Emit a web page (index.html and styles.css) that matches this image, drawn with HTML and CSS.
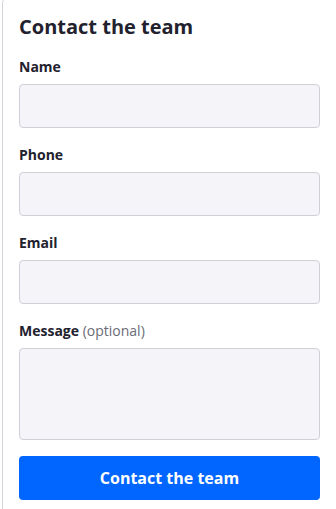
FILE: index.html
```html
<!DOCTYPE html>
<html lang="en">
<head>
<meta charset="utf-8">
<title>Contact the team</title>
<link rel="stylesheet" href="styles.css">
</head>
<body>
<div class="card">
  <h2 class="title">Contact the team</h2>
  <form class="form">
    <div class="field">
      <label class="label" for="name">Name</label>
      <input class="input" id="name" type="text">
    </div>
    <div class="field">
      <label class="label" for="phone">Phone</label>
      <input class="input" id="phone" type="tel">
    </div>
    <div class="field">
      <label class="label" for="email">Email</label>
      <input class="input" id="email" type="email">
    </div>
    <div class="field">
      <label class="label" for="msg">Message <span class="opt">(optional)</span></label>
      <textarea class="input textarea" id="msg"></textarea>
    </div>
    <button class="button" type="button">Contact the team</button>
  </form>
</div>
</body>
</html>
```
FILE: styles.css
```css
html, body {
  margin: 0;
  padding: 0;
  overflow: hidden;
  background: #ffffff;
}
body {
  font-family: "Open Sans", "Noto Sans", sans-serif;
  color: #22212e;
}
.card {
  box-sizing: border-box;
  width: 346px;
  margin: -3px 0 0 2px;
  padding: 16px 27px 16px 16px;
  border: 1px solid #d4d4dc;
  border-radius: 6px;
  background: #ffffff;
}
.title {
  margin: 0 0 16px 0;
  font-size: 20px;
  line-height: 26px;
  font-weight: 700;
}
.form {
  display: flex;
  flex-direction: column;
  gap: 16px;
}
.field {
  display: flex;
  flex-direction: column;
  gap: 7px;
}
.label {
  font-size: 14px;
  line-height: 21px;
  font-weight: 700;
}
.opt {
  font-weight: 400;
  color: #6b6b76;
}
.input {
  box-sizing: border-box;
  display: block;
  width: 100%;
  height: 44px;
  margin: 0;
  border: 1px solid #cfcfd7;
  border-radius: 4px;
  background: #f5f5f9;
  font: inherit;
}
.textarea {
  height: 92px;
  resize: none;
}
.button {
  box-sizing: border-box;
  height: 44px;
  width: 100%;
  border: 0;
  border-radius: 4px;
  background: #0066ff;
  color: #ffffff;
  font-family: "Open Sans", "Noto Sans", sans-serif;
  font-size: 16px;
  font-weight: 700;
}
```
